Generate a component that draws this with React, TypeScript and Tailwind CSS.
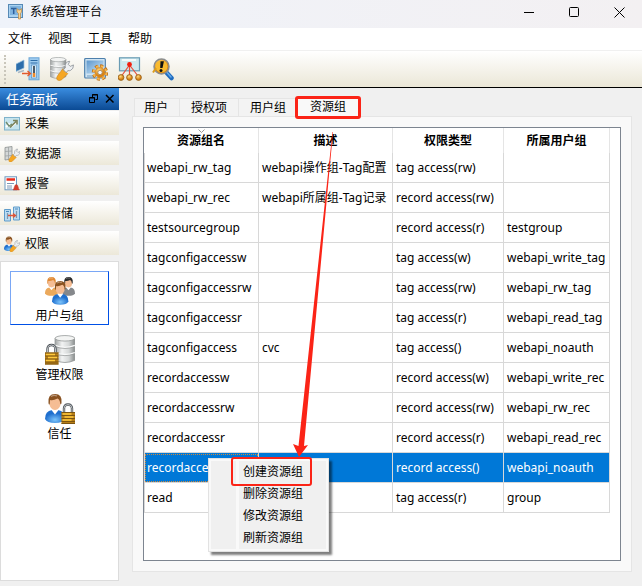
import React from "react";
import clsx from "clsx";

const menus = ["文件", "视图", "工具", "帮助"];
const tabs = ["用户", "授权项", "用户组", "资源组"];
const headers = ["资源组名", "描述", "权限类型", "所属用户组"];

const rows = [
  ["webapi_rw_tag", "webapi操作组-Tag配置", "tag access(rw)", ""],
  ["webapi_rw_rec", "webapi所属组-Tag记录", "record access(rw)", ""],
  ["testsourcegroup", "", "record access(r)", "testgroup"],
  ["tagconfigaccessw", "", "tag access(w)", "webapi_write_tag"],
  ["tagconfigaccessrw", "", "tag access(rw)", "webapi_rw_tag"],
  ["tagconfigaccessr", "", "tag access(r)", "webapi_read_tag"],
  ["tagconfigaccess", "cvc", "tag access()", "webapi_noauth"],
  ["recordaccessw", "", "record access(w)", "webapi_write_rec"],
  ["recordaccessrw", "", "record access(rw)", "webapi_rw_rec"],
  ["recordaccessr", "", "record access(r)", "webapi_read_rec"],
  ["recordaccess", "", "record access()", "webapi_noauth"],
  ["read", "", "tag access(r)", "group"],
];
const selectedRow = 10;

const contextItems = ["创建资源组", "删除资源组", "修改资源组", "刷新资源组"];

/* shared shapes, drawn in the coordinates of the parent svg */

const Wrench = ({ x = 0, y = 0, s = 1 }) => (
  <g transform={`translate(${x} ${y}) scale(${s})`}>
    <path d="M6 8.500 11 13.500 5 19.500Q2 21.500 0 19.500Q-1 17.500 1 15Z" fill="#f5a623" stroke="#d08a1e" strokeWidth=".7" />
    <path d="M6.500 9.500 8.500 7.500Q7.500 3 11 1.200L13 .8 11.500 4 13.500 6 16.800 4.500Q17 8.500 14 10Q12.500 10.800 11 10.300L9.500 12.500Z" fill="#eef0f2" stroke="#858c94" strokeWidth=".8" />
  </g>
);

const Cylinder = ({ x = 0, y = 0, s = 1 }) => (
  <g transform={`translate(${x} ${y}) scale(${s})`}>
    <path d="M.5 3v20q9 4 18 0V3Z" fill="url(#metal)" stroke="#8d9091" strokeWidth=".7" />
    <ellipse cx="9.500" cy="3" rx="9" ry="2.500" fill="#f3f4f3" stroke="#939797" strokeWidth=".7" />
    <path d="M.5 9.500q9 3.500 18 0M.5 16q9 3.500 18 0" fill="none" stroke="#f9fafa" strokeWidth="1.300" />
    <path d="M.5 10.500q9 3.500 18 0M.5 17q9 3.500 18 0" fill="none" stroke="#8c9090" strokeWidth=".6" />
  </g>
);

const Lock = ({ x = 0, y = 0 }) => (
  <g transform={`translate(${x} ${y})`}>
    <path d="M2.500 9V5.500Q2.500 1.500 6.500 1.500T10.500 5.500V9" fill="none" stroke="#4d5358" strokeWidth="2.400" />
    <path d="M2.500 9V5.500Q2.500 1.500 6.500 1.500T10.500 5.500V9" fill="none" stroke="#c9cdd0" strokeWidth=".9" />
    <rect x="0" y="9" width="13.500" height="12" fill="#b57d18" />
    <path d="M0 9.500h13.500M0 12.500h13.500M0 15.500h13.500M0 18.500h13.500M0 20.500h13.500" stroke="#7a5410" strokeWidth="1.200" />
    <path d="M1 11h9M3 14h9M1 17h9" stroke="#ffc93c" strokeWidth="1.300" />
  </g>
);

const Person = ({ x = 0, y = 0, s = 1, hair = "#8a5220", body = "url(#shirt)" }) => (
  <g transform={`translate(${x} ${y}) scale(${s})`}>
    <path d="M0 25Q0 17 7 16h6q7 1 7 9-2 4-10 4T0 25Z" fill={body} />
    <path d="M6.500 16 10 20.500 13.500 16 12 14H8Z" fill="#fff" />
    <ellipse cx="10" cy="9" rx="5.600" ry="7" fill="#f5bd94" />
    <path d="M3.500 9Q2.500 0 10 0T16.500 9Q16 11 15.300 10 15 5.500 12.500 4.500 8 7 5 6 5 8 4.700 10.500 3.700 11 3.500 9Z" fill={hair} />
    <path d="M6 2.500Q9 .5 12 2" fill="none" stroke="#fff" strokeOpacity=".4" strokeWidth="1.200" />
  </g>
);

const Defs = () => (
  <svg width="0" height="0" className="absolute" aria-hidden="true">
    <defs>
      <linearGradient id="metal">
        <stop offset="0" stopColor="#9fa3a3" />
        <stop offset=".35" stopColor="#f2f3f3" />
        <stop offset=".7" stopColor="#d4d7d7" />
        <stop offset="1" stopColor="#878b8b" />
      </linearGradient>
      <radialGradient id="shirt" cx=".5" cy=".75">
        <stop offset="0" stopColor="#7cc4fb" />
        <stop offset="1" stopColor="#1f6fce" />
      </radialGradient>
      <radialGradient id="amber" cx=".4" cy=".3">
        <stop offset="0" stopColor="#ffdc84" />
        <stop offset="1" stopColor="#d98414" />
      </radialGradient>
      <linearGradient id="screen" x2="1" y2="1">
        <stop offset="0" stopColor="#5c96cc" />
        <stop offset="1" stopColor="#d2eafa" />
      </linearGradient>
    </defs>
  </svg>
);

const AppIcon = () => (
  <svg width="16" height="16" viewBox="0 0 16 16" aria-hidden="true">
    <rect x=".5" y=".5" width="14" height="13" fill="#a9d2f1" stroke="#5689b5" />
    <rect x="2" y="2" width="11" height="9" fill="#7fb4e0" />
    <path d="M3 4.500h5.500M5.700 4.500v5.500" stroke="#2d5f9c" strokeWidth="1.500" />
    <path d="M9 8V4.500L10.500 6h1.500L13.500 4.500V8L12.500 9.500V15H10.500V9.500Z" fill="#f7d596" stroke="#bb7b2b" strokeWidth=".6" />
  </svg>
);

const CollectIcon = () => (
  <svg width="24" height="24" viewBox="0 0 24 24" aria-hidden="true">
    <path d="M0 7 8 3V11L0 14.500Z" fill="#2d6eab" stroke="#9cc3df" strokeWidth=".7" />
    <path d="M2 15.500 8 13.500" stroke="#a9b8c3" strokeWidth="1.500" />
    <rect x="13" y=".8" width="10" height="22" fill="#9ecbee" stroke="#6aa5d6" />
    <path d="M14.500 3.500h7M14.500 6h7" stroke="#2e6da8" strokeWidth="1.200" />
    <rect x="15.500" y="8" width="5" height="13" fill="#d9ecf9" stroke="#4c85b8" strokeWidth=".6" />
    <path d="M18 9v7" stroke="#4b5a68" strokeWidth="2" />
    <path d="M18 16v4" stroke="#ef8b2b" strokeWidth="2.500" />
    <path d="M6 16.500h8M11.500 14l3 2.500-3 2.500" fill="none" stroke="#e2592c" strokeWidth="1.300" />
  </svg>
);

const SourceIcon = () => (
  <svg width="24" height="24" viewBox="0 0 24 24" aria-hidden="true">
    <Cylinder x={0} y={0} s={0.86} />
    <Wrench x={7} y={3.5} s={0.98} />
  </svg>
);

const SettingsIcon = () => (
  <svg width="24" height="24" viewBox="0 0 24 24" aria-hidden="true">
    <rect x=".7" y="1.500" width="20.600" height="19.500" rx="1" fill="#cfe4f3" stroke="#4d7fac" strokeWidth="1.200" />
    <rect x="2.500" y="3.500" width="17" height="13" fill="url(#screen)" />
    <path d="M3 19h9" stroke="#6f9cc1" />
    <circle cx="16" cy="15.500" r="6.700" fill="none" stroke="#b96a12" strokeWidth="3" strokeDasharray="2.900 2.360" />
    <circle cx="16" cy="15.500" r="6.400" fill="none" stroke="#f8b64c" strokeWidth="2" strokeDasharray="2.700 2.330" />
    <circle cx="16" cy="15.500" r="5" fill="url(#amber)" stroke="#d58521" strokeWidth=".6" />
    <circle cx="16" cy="15.500" r="2.200" fill="#f3f7fb" stroke="#98734a" strokeWidth=".7" />
  </svg>
);

const TopologyIcon = () => (
  <svg width="24" height="24" viewBox="0 0 24 24" aria-hidden="true">
    <rect x="1.500" y=".8" width="20" height="13" fill="#cde9ee" stroke="#6a9cb4" strokeWidth="1.200" />
    <path d="M4 3h14" stroke="#fff" strokeWidth="1.500" />
    <path d="M11.500 8 3.500 19M11.500 8v11M11.500 8l8.500 11" stroke="#e5503c" strokeWidth="1.200" />
    <circle cx="11.500" cy="7.500" r="2.400" fill="#f2200f" />
    {[3, 11.5, 20.5].map((cx) => (
      <circle key={cx} cx={cx} cy="20.500" r="2.900" fill="url(#amber)" stroke="#8f5a16" strokeWidth=".8" />
    ))}
  </svg>
);

const DiagnoseIcon = () => (
  <svg width="24" height="24" viewBox="0 0 24 24" aria-hidden="true">
    <path d="m14 15 5.500 6" stroke="#1e6cc0" strokeWidth="4.500" strokeLinecap="round" />
    <path d="m15 15.500 4 4.500" stroke="#69abe8" strokeWidth="1.500" strokeLinecap="round" />
    <circle cx="9.500" cy="9.500" r="7.500" fill="url(#amber)" stroke="#8b8e90" strokeWidth="1.500" />
    <circle cx="9.500" cy="9.500" r="6" fill="#f9bb2e" />
    <path d="M1 15.500 4 11" stroke="#dd9d1c" strokeWidth="2" />
    <path d="M8.500 4.200h3.400L10.500 11H8.200Z" fill="#111" />
    <circle cx="9" cy="13.500" r="1.500" fill="#111" />
  </svg>
);

const tools = [
  { name: "采集", icon: <CollectIcon /> },
  { name: "数据源", icon: <SourceIcon /> },
  { name: "设置", icon: <SettingsIcon /> },
  { name: "拓扑", icon: <TopologyIcon /> },
  { name: "诊断", icon: <DiagnoseIcon /> },
];

const categories = [
  {
    name: "采集",
    icon: (
      <>
        <rect x=".5" y="1.500" width="15" height="12.500" fill="#c5e4ee" stroke="#7fb2cb" />
        <path d="M2 11 5 8l3 2 5-4" fill="none" stroke="#fff" strokeWidth="2" />
        <path d="M2 6 5 10 8 8" fill="none" stroke="#6f8a6c" strokeWidth="1.400" />
        <path d="M6 11.500 12 5.500M9 4.500h4v4" fill="none" stroke="#7b835c" strokeWidth="1.600" />
      </>
    ),
  },
  {
    name: "数据源",
    icon: (
      <>
        <path d="M1 1.500 8 .5V13L1 14Z" fill="#d5d8d8" stroke="#8c9090" strokeWidth=".8" />
        <path d="M1 5.500 8 5M1 10 8 9.500M4.500 1v12.500" stroke="#9da2a2" strokeWidth=".8" />
        <Wrench x={5} y={2.5} s={0.66} />
      </>
    ),
  },
  {
    name: "报警",
    icon: (
      <>
        <rect x="1" y=".8" width="11.500" height="13" fill="#fff" stroke="#6b97bf" />
        <path d="M2.500 3.500h8.500" stroke="#e82d1c" strokeWidth="2.500" />
        <path d="M3 7.500h7M3 10h5M3 12h5" stroke="#7c98b5" />
        <path d="M9 14Q10 12.500 10.500 10.500 11 8.500 12.300 8.500T14 10.500Q14.500 13 15.500 14Z" fill="#d93a29" stroke="#b5473b" strokeWidth=".5" />
      </>
    ),
  },
  {
    name: "数据转储",
    icon: (
      <>
        <path d="M.5 3.500h6V15h-6ZM9.500 1h6v13h-6Z" fill="#bcdcf2" stroke="#5f9ccb" strokeWidth="1" />
        <path d="M2 5.500h3M11 3h3" stroke="#4a8abf" strokeWidth="1.200" />
        <path d="M3.500 7v6M12.500 5v7" stroke="#7d97af" strokeWidth="1.200" />
        <path d="M4 9.500h7M9 7.500l2.500 2L9 11.500" fill="none" stroke="#dd5437" strokeWidth="1.300" />
      </>
    ),
  },
  {
    name: "权限",
    icon: (
      <>
        <Person x={0} y={0.5} s={0.5} />
        <Wrench x={6} y={4} s={0.58} />
      </>
    ),
  },
];

const entries = [
  {
    name: "用户与组",
    icon: (
      <>
        <Person x={0} y={1} s={0.65} hair="#e08a35" body="#eba95c" />
        <Person x={17} y={1} s={0.65} hair="#2b2b2b" body="#85888c" />
        <Person x={7} y={5} s={0.82} />
      </>
    ),
  },
  {
    name: "管理权限",
    icon: (
      <>
        <Cylinder x={9.5} y={0} s={1.1} />
        <Lock x={0} y={8.5} />
      </>
    ),
  },
  {
    name: "信任",
    icon: (
      <>
        <Person x={0} y={0} s={1} />
        <Lock x={16.5} y={9} />
      </>
    ),
  },
];

const TitleBar = () => (
  <header className="flex h-7 items-start justify-between bg-linear-to-r from-[#eff3fa] to-[#f3f0f2]">
    <div className="flex h-6 items-center gap-1.5 pl-2">
      <AppIcon />
      <h1>系统管理平台</h1>
    </div>
    <div className="flex">
      <button aria-label="最小化" className="flex h-6 w-[45px] items-center justify-center">
        <svg width="11" height="11"><path d="M0 5.500h10" stroke="#000" /></svg>
      </button>
      <button aria-label="最大化" className="flex h-6 w-[45px] items-center justify-center">
        <svg width="11" height="11"><rect x=".5" y=".5" width="9" height="9" rx="1" fill="none" stroke="#000" /></svg>
      </button>
      <button aria-label="关闭" className="flex h-6 w-[45px] items-center justify-center">
        <svg width="11" height="11"><path d="m.5.5 10 10M10.500.5l-10 10" stroke="#000" /></svg>
      </button>
    </div>
  </header>
);

const Sidebar = () => (
  <aside className="flex w-[119px] shrink-0 flex-col pb-[5px]">
    <div className="flex h-[22px] items-center justify-between bg-linear-to-b from-[#3a8de0] to-[#0a4a94] pr-1 pl-1.5">
      <h2 className="text-[13px] text-white">任务面板</h2>
      <div className="flex gap-1.5">
        <button aria-label="浮动">
          <svg width="10" height="10" fill="none" stroke="#000">
            <path d="M3.500 3V.5h5v5H6.500M3 1h6M.5 3.500h5v5h-5ZM0 4h6" />
          </svg>
        </button>
        <button aria-label="关闭面板">
          <svg width="10" height="10"><path d="m1 1 7.500 7.500M8.500 1 1 8.500" stroke="#000" strokeWidth="1.500" /></svg>
        </button>
      </div>
    </div>
    <nav className="mt-px flex flex-col gap-1.5">
      {categories.map((c) => (
        <button key={c.name} className="flex h-6 items-center gap-[5px] bg-linear-to-b from-white to-[#ece8d9] pt-px pl-1">
          <svg width="16" height="16" viewBox="0 0 16 16" aria-hidden="true">{c.icon}</svg>
          {c.name}
        </button>
      ))}
    </nav>
    <div className="mt-1.5 flex flex-1 flex-col gap-[5px] border border-[#dcdcdc] bg-white px-[9px] pt-[9px]">
      {entries.map((e, i) => (
        <button
          key={e.name}
          className={clsx(
            "flex h-[54px] flex-col items-center gap-0.5 border pt-1",
            i === 0 ? "border-[#0050e6] border-t-[#7aa7f5] border-l-[#7aa7f5]" : "border-transparent"
          )}
        >
          <svg width="30" height="30" viewBox="0 0 30 30" className="shrink-0" aria-hidden="true">{e.icon}</svg>
          {e.name}
        </button>
      ))}
    </div>
  </aside>
);

const GroupTable = () => (
  <table className="w-[466px] table-fixed border-separate border-spacing-0">
    <colgroup>
      <col className="w-[115px]" />
      <col className="w-[134px]" />
      <col className="w-[111px]" />
      <col className="w-[106px]" />
    </colgroup>
    <thead>
      <tr>
        {headers.map((h, i) => (
          <th key={h} className="relative h-[25px] border-r border-[#e5e5e5] p-0 text-center font-bold">
            {i === 0 && (
              <svg width="7" height="4" className="absolute top-px left-[54px]" aria-hidden="true">
                <path d="m.5.5 3 3 3-3" fill="none" stroke="#999" />
              </svg>
            )}
            {h}
          </th>
        ))}
      </tr>
    </thead>
    <tbody>
      {rows.map((row, r) => (
        <tr key={row[0]} className={clsx(r === selectedRow && "bg-[#0078d7] text-white")}>
          {row.map((cell, c) => (
            <td
              key={c}
              className={clsx(
                "h-[30px] border-r border-b border-[#d8d8d8] py-0 pr-0 pl-[3px] whitespace-nowrap first:border-l first:pl-0.5",
                r === selectedRow && c === 0 && "outline outline-offset-[-2px] outline-dotted outline-[#d08a3c]"
              )}
            >
              {cell}
            </td>
          ))}
        </tr>
      ))}
    </tbody>
  </table>
);

const ContextMenu = () => (
  <div className="absolute top-[330px] left-16 w-[121px] border border-[#e2e2e2] bg-[#f9f9f9] p-0.5 shadow-[3px_3px_2px_rgba(0,0,0,0.5)]">
    <ul className="flex flex-col bg-[#f0f0f0]">
      {contextItems.map((item, i) => (
        <li key={item} className="relative flex">
          <span className="w-7 shrink-0 border-r-3 border-[#f9f9f9]" />
          <button className="h-[22px] flex-1 pl-1 text-left">{item}</button>
          {i === 0 && <span className="absolute -top-1 right-3.5 -bottom-[3px] left-5 z-10 rounded-[3px] border-2 border-[#fb2417]" />}
        </li>
      ))}
    </ul>
  </div>
);

export default function App() {
  return (
    <div className="flex min-h-screen flex-col bg-[#f0f0f0] font-['Noto_Sans','Noto_Sans_CJK_SC',sans-serif] text-[12px] leading-4 text-black">
      <Defs />
      <TitleBar />
      <nav className="flex h-[23px] items-center gap-4 border-b border-[#f0f0f0] bg-white px-2">
        {menus.map((m) => (
          <button key={m}>{m}</button>
        ))}
      </nav>
      <div className="flex h-[37px] items-center gap-2.5 border-b border-black bg-linear-to-b from-white to-[#ebe7d7] pl-1">
        <span className="h-[29px] border-l-2 border-dotted border-[#c9c6bb]" />
        {tools.map((t) => (
          <button key={t.name} aria-label={t.name}>{t.icon}</button>
        ))}
      </div>

      <div className="flex flex-1">
        <Sidebar />
        <main className="flex min-w-0 flex-1 flex-col pt-2 pr-2.5 pb-3.5 pl-[13px]">
          <div role="tablist" className="flex h-5 items-end pl-0.5">
            {tabs.map((t, i) => (
              <button
                key={t}
                role="tab"
                aria-selected={i === 3}
                className={clsx(
                  "relative border-t border-[#e5e5e5] first:border-l first:pl-[9px]",
                  i === 3 ? "h-[19px] bg-[#f9f9f9] px-3" : "h-[18px] border-r bg-[#f3f3f3] px-[11px]"
                )}
              >
                {t}
                {i === 3 && <span className="absolute -inset-x-[3px] -top-0.5 -bottom-[3px] rounded-[3px] border-[3px] border-[#fb2417]" />}
              </button>
            ))}
          </div>
          <section className="flex flex-1 flex-col border border-[#e5e5e5] bg-[#f9f9f9] p-2.5">
            <div className="relative flex-1 border border-[#7d8590] bg-white">
              <GroupTable />
              <ContextMenu />
              <svg width="50" height="330" className="pointer-events-none absolute top-0 left-[145px]" aria-hidden="true">
                <path d="M43.500 4 44 4 15 318 19 317 10 329 4 316 9.500 318Z" fill="#fb2417" />
              </svg>
            </div>
          </section>
        </main>
      </div>
    </div>
  );
}
